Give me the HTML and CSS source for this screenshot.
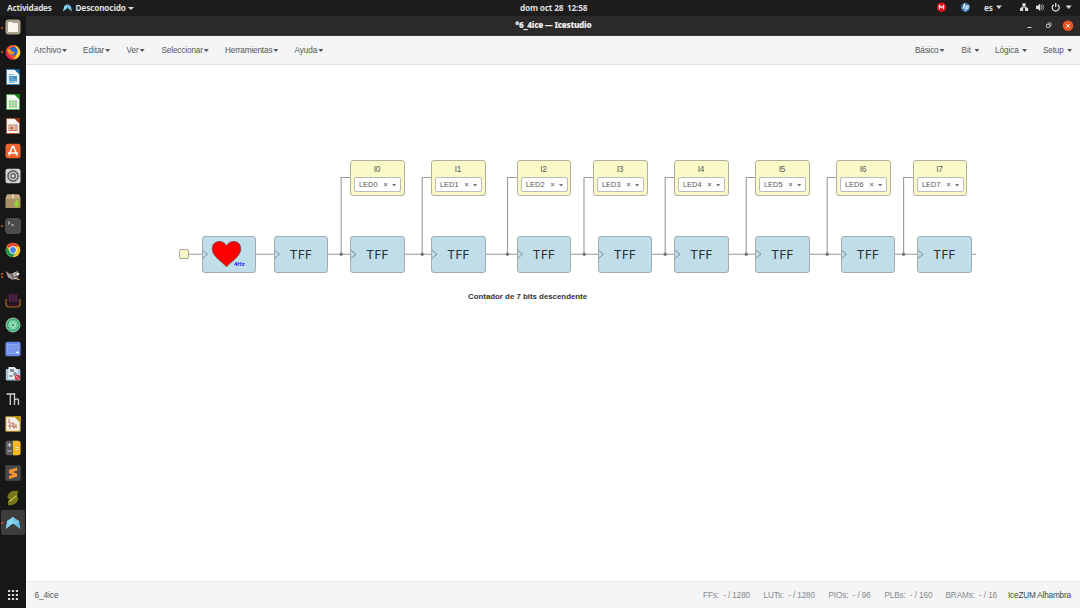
FILE: index.html
```html
<!DOCTYPE html>
<html lang="es">
<head>
<meta charset="utf-8">
<title>*6_4ice — Icestudio</title>
<link rel="stylesheet" href="styles.css">
</head>
<body>
<header class="topbar">
  <span class="activities">Actividades</span>
  <svg class="app-logo" viewBox="0 0 16 14"><path d="M0 13 2 4 8 0 8 7Z" fill="#8edaf5"/><path d="M16 13 14 4 8 0 8 7Z" fill="#6cc4e8"/></svg>
  <span class="app-name">Desconocido</span><i class="caret light"></i>
  <span class="clock">dom oct 28&nbsp; 12:58</span>
  <svg class="tray" viewBox="0 0 150 16">
    <circle cx="11.5" cy="7.3" r="4.7" fill="#e20d18"/><path d="M9.4 9.3V5.5L11.5 7.6 13.6 5.5V9.3" fill="none" stroke="#fff" stroke-width="1.1"/>
    <circle cx="35.5" cy="7.3" r="4.4" fill="#3f7fb9"/><path d="M34.700 3.200 33 8.800M33.800 5.800h1.600l-.8 3M37 6 35.400 11.400M36.700 5.800h1.800l-.9 3h-1.500" fill="none" stroke="#fff" stroke-width=".9"/>
    <path d="M66 5.600h5.800L68.900 8.900Z" fill="#ddd"/>
    <path d="M92.400 3.300h3.200v3h-3.200ZM90 8h3.200v3H90ZM95 8h3.200v3H95Z" fill="#ddd"/><path d="M94 6v1.500M91.600 8.500V7.200h5v1.300" stroke="#ddd" fill="none"/>
    <path d="M106 5.800h1.800L110.200 3.500v7.600L107.800 8.900H106Z" fill="#ddd"/><path d="M111.300 5.300q1.400 2 0 4" fill="none" stroke="#ddd" stroke-width=".9"/><path d="M112.600 4q2.400 3.300 0 6.600" fill="none" stroke="#999" stroke-width=".9"/>
    <path d="M123.700 4.700a3.500 3.500 0 1 0 4 0M125.700 3.100v4" fill="none" stroke="#e4e4e4" stroke-width="1.200"/>
    <path d="M135.800 5.600h5.800L138.700 8.900Z" fill="#ddd"/>
  </svg>
  <span class="lang">es</span>
</header>

<div class="desktop">
  <nav class="dock">
    <ul class="launchers">
      <li class="run"><svg viewBox="0 0 16 16"><rect x=".5" y=".5" width="15" height="15" rx="3" fill="#aaa18e"/><path d="M3 4q0-1 1-1h3l1 1h4q1 0 1 1v7q0 1-1 1H4q-1 0-1-1Z" fill="#f8f6ef"/></svg></li>
      <li class="run"><svg viewBox="0 0 16 16"><circle cx="8" cy="8.300" r="7.300" fill="#ff5a2a"/><path d="M10 1q5 3 5.300 7.500A7.300 7.300 0 0 1 8 15.600Q14 12 10 1" fill="#ffd22e"/><path d="M1.500 4.500Q-1 13 6 15.400l4-.4Q3 13 1.500 4.500" fill="#e8224f"/><circle cx="8.400" cy="7.300" r="4.200" fill="#2468c8"/><path d="M2.500 5Q6 4.500 7 7.500l3 .2Q9 11 5.500 10.300 2.500 9 2.500 5" fill="#ff9820"/></svg></li>
      <li><svg viewBox="0 0 16 16"><path d="M1.500.5H10l4.500 4.500v10.500h-13Z" fill="#f3f5f7" stroke="#2585c4" stroke-width=".7"/><path d="M9 0h6v6Z" fill="#145f92"/><path d="M4 7h8v5.500H4Z" fill="#3f91c8"/><path d="M3.500 5.500h5M3.500 9h5M3.500 11h9M3.500 13.500h6" stroke="#86b8d8"/></svg></li>
      <li><svg viewBox="0 0 16 16"><path d="M1.500.5H10l4.500 4.500v10.500h-13Z" fill="#f5f7f3" stroke="#31b52c" stroke-width=".7"/><path d="M9 0h6v6Z" fill="#14851b"/><path d="M4 6.500h8v7H4Z" fill="#80c878"/><path d="M4 8.800h8M4 11.200h8M6.600 6.500v7M9.400 6.500v7" stroke="#e1f4dc" stroke-width=".7"/></svg></li>
      <li><svg viewBox="0 0 16 16"><path d="M1.500.5H10l4.500 4.500v10.500h-13Z" fill="#f7f4f1" stroke="#bf4f25" stroke-width=".7"/><path d="M9 0h6v6Z" fill="#8d3213"/><rect x="4" y="7" width="8" height="5.500" fill="#f0d4c8" stroke="#b66145" stroke-width=".8"/><circle cx="6.800" cy="10" r="1.500" fill="#c15939"/><path d="M9 9h2M9 11h2" stroke="#b66145" stroke-width=".7"/></svg></li>
      <li><svg viewBox="0 0 16 16"><rect x=".5" y=".8" width="15" height="14.400" rx="2.500" fill="#f0622d"/><path d="M4 12.500 7.400 3.500h1.200L12 12.500M3 10h10" fill="none" stroke="#fff" stroke-width="1.500"/></svg></li>
      <li><svg viewBox="0 0 16 16"><rect x=".5" y=".8" width="15" height="14.400" rx="2.500" fill="#d4d4d1"/><circle cx="8" cy="8" r="5" fill="none" stroke="#555" stroke-width="1.300"/><circle cx="8" cy="8" r="2.300" fill="none" stroke="#555" stroke-width="1.300"/><circle cx="8" cy="8" r="6" fill="none" stroke="#777" stroke-width=".7" stroke-dasharray="1 1"/></svg></li>
      <li><svg viewBox="0 0 16 16"><path d="M2 1.500h12l1.500 4v9.500H.5V5.500Z" fill="#a98e65"/><path d="M2 1.500h12l1.500 4H.5Z" fill="#c4ab81"/><path d="M7 1.500h2v4H7Z" fill="#e4d4b5"/><path d="M10.300 6.500h3v4h2L11.800 15 8.300 10.500h2Z" fill="#98cf38"/></svg></li>
      <li class="run"><svg viewBox="0 0 16 16"><rect x=".8" y=".8" width="14.400" height="14.400" rx="2" fill="#4b4b4b" stroke="#5c5c5c"/><path d="M3 3.500 5 5 3 6.500M6 7h3" fill="none" stroke="#ddd" stroke-width=".9"/></svg></li>
      <li><svg viewBox="0 0 16 16"><circle cx="8" cy="8" r="7.300" fill="#f4c62c"/><path d="M8 8 1.600 4.300A7.300 7.300 0 0 1 14.400 4.600H8Z" fill="#db4938"/><path d="M1.600 4.300A7.300 7.300 0 0 0 7.600 15.300L11 9.500H5Z" fill="#269653"/><circle cx="8" cy="8" r="3.700" fill="#fff"/><circle cx="8" cy="8" r="2.900" fill="#4387ef"/></svg></li>
      <li class="run twice"><svg viewBox="0 0 16 16"><path d="M1 4 4 6.500 9 6 12.500 3.500 14 7 12 12 7 13 3 10.500Z" fill="#77736a"/><path d="M1 4 5 8l3 4-5-2Z" fill="#aaa79e"/><circle cx="10" cy="7" r="1.700" fill="#eee"/><circle cx="13" cy="7" r="1.300" fill="#eee"/><circle cx="10.200" cy="7" r=".7" fill="#111"/><path d="m9 11 5 1.500" stroke="#ddd"/><path d="m13 12 1.500 1" stroke="#d88b38" stroke-width="1.500"/></svg></li>
      <li><svg viewBox="0 0 16 16"><path d="M1 7v5q0 3 3 3h8q3 0 3-3V7" fill="#33151d" stroke="#a06a1b" stroke-width="1.200"/><rect x="2.500" y="1.500" width="11" height="11" rx="1.500" fill="#32152e"/><path d="M5 3v7M8 2v8M11 3v7" stroke="#6a365d"/><path d="M3 11h10" stroke="#21101e" stroke-width="2"/></svg></li>
      <li><svg viewBox="0 0 16 16"><circle cx="8" cy="8" r="7" fill="#3fae75" stroke="#b6dec9" stroke-width=".8"/><g fill="none" stroke="#b8ecd0" stroke-width=".8"><ellipse cx="8" cy="8" rx="4.700" ry="2"/><ellipse cx="8" cy="8" rx="4.700" ry="2" transform="rotate(60 8 8)"/><ellipse cx="8" cy="8" rx="4.700" ry="2" transform="rotate(120 8 8)"/></g></svg></li>
      <li><svg viewBox="0 0 16 16"><rect x=".4" y=".8" width="15.200" height="14.400" rx="2" fill="#6688e4"/><rect x="2.500" y="3.500" width="11" height="9" fill="#7798ee" stroke="#b7caff" stroke-width=".7" stroke-dasharray="1.500 1"/><path d="M11 11.500h3M12.500 10v3" stroke="#fff" stroke-width=".8"/></svg></li>
      <li><svg viewBox="0 0 16 16"><rect x=".8" y="3" width="14.500" height="11.500" rx="1" fill="#a9c5dc"/><path d="M3.500 1h6l3 3v9h-9Z" fill="#edf0f1"/><path d="M5 3h4v3H5ZM4.500 9h3v2h-3Z" fill="#7b93a4"/><circle cx="10" cy="8" r="2" fill="#8397a5"/><circle cx="12.500" cy="11.500" r="2.700" fill="#c83b42"/><path d="m11 10 3 3" stroke="#fff" stroke-width=".7"/></svg></li>
      <li><svg viewBox="0 0 16 16"><path d="M1.500 3h8M5.300 3v11M9.500 2v12M9.500 9q4-2.500 4 1v4" fill="none" stroke="#d2d2d0" stroke-width="1.300"/></svg></li>
      <li><svg viewBox="0 0 16 16"><path d="M.8.7H10l5.200 5.200v9.400H.8Z" fill="#f4eee5" stroke="#ad8414"/><path d="M9 0h7v7Z" fill="#ba930e"/><path d="M4 3v4h4v4h4M3 10h5M5 8v5M9 7v6M11 8v4" fill="none" stroke="#b45c50" stroke-width=".8"/></svg></li>
      <li><svg viewBox="0 0 16 16"><rect x=".5" y=".8" width="15" height="14.400" rx="2.500" fill="#5b5b58"/><path d="M8 .8h5q2.500 0 2.500 2.500v9.400q0 2.500-2.500 2.500H8Z" fill="#f9b624"/><path d="M2.500 5h4M4.500 3v4M2.500 11h4M10.500 7.500h3M10.500 9.500h3" stroke="#eee" stroke-width=".8"/></svg></li>
      <li><svg viewBox="0 0 16 16"><rect x=".3" y=".3" width="15.400" height="15.400" rx="1" fill="#484848"/><path d="M12 2.500v3L7.500 7 12 8.500v3L4 14v-3l4-1.300L4 8V5Z" fill="#f7942c"/></svg></li>
      <li><svg viewBox="0 0 16 16"><path d="M13 .8Q5 0 2.800 5q-1.300 3.500 2 4.500Q2 11 3.300 15.200q7 .5 9.500-4.700 1.500-3.500-1.500-4.500Q13.500 4 13 .8Z" fill="#77781c"/><path d="m4 11.500 8-6" fill="none" stroke="#c4c53c" stroke-width="1.300"/></svg></li>
      <li class="run active"><svg viewBox="0 0 16 16"><path d="M.7 14 2 6 8 2v6.500Z" fill="#82d2f2"/><path d="M15.300 14 14 6 8 2v6.500Z" fill="#6cc0e6"/><path d="M2 6 8 8.500 14 6M8 2v6.500" fill="none" stroke="#a7e2f7" stroke-width=".6"/></svg></li>
    </ul>
    <svg class="apps" viewBox="0 0 12 12"><path d="M1 2h10M1 6h10M1 10h10" stroke="#d8d8d8" stroke-width="2.200" stroke-dasharray="2.200 1.700"/></svg>
  </nav>

  <main class="window">
    <div class="titlebar"><b>*6_4ice — Icestudio</b>
      <svg class="controls" viewBox="0 0 54 20"><path d="M1.500 11.500h4" stroke="#ddd"/><path d="M20.500 8.500h3v3h-3ZM22 8.300V7h3v3h-1.300" fill="none" stroke="#bbb" stroke-width=".9"/><circle cx="42" cy="9.800" r="5.300" fill="#e95420"/><path d="m40.100 7.900 3.800 3.800m0-3.800-3.800 3.800" stroke="#fff" stroke-width="1"/></svg>
    </div>
    <div class="menubar">
      <div class="menus left-menus">
        <span class="m-file">Archivo<i class="caret"></i></span><span class="m-edit">Editar<i class="caret"></i></span><span class="m-view">Ver<i class="caret"></i></span><span class="m-select">Seleccionar<i class="caret"></i></span><span class="m-tools">Herramientas<i class="caret"></i></span><span>Ayuda<i class="caret"></i></span>
      </div>
      <div class="menus right-menus">
        <span class="m-basic">Básico<i class="caret"></i></span><span class="m-bit">Bit<i class="caret gap"></i></span><span class="m-logic">Lógica<i class="caret gap"></i></span><span class="m-setup">Setup<i class="caret gap"></i></span>
      </div>
    </div>
    <section class="canvas">
      <svg class="wires" viewBox="26 65 1054 516">
        <path d="M188 254.300H976M341.200 254V177.500H351M422.200 254V177.500H432M507.500 254V177.500H517M584 254V177.500H594M665.200 254V177.500H675M746.200 254V177.500H756M827.200 254V177.500H837M903.600 254V177.500H913"/>
        <g><circle cx="341.200" cy="254.300" r="1.700"/><circle cx="422.200" cy="254.300" r="1.700"/><circle cx="507.500" cy="254.300" r="1.700"/><circle cx="584.200" cy="254.300" r="1.700"/><circle cx="665.200" cy="254.300" r="1.700"/><circle cx="746.200" cy="254.300" r="1.700"/><circle cx="827.200" cy="254.300" r="1.700"/><circle cx="903.600" cy="254.300" r="1.700"/></g>
      </svg>
      <div class="source"></div>
      <div class="block heart"><svg viewBox="0 0 54 36"><path d="M24.500 30.800C20 25.500 10.200 20.500 10.200 12.700 10.200 4.500 20.500 3 24.500 9.700 28.500 3 38.800 4.500 38.800 12.700 38.800 20.500 29 25.500 24.500 30.800Z" fill="#f00" stroke="#65404a" stroke-width=".7"/></svg><span>4Hz</span></div>
      <div class="block t0">TFF</div><div class="block t1">TFF</div><div class="block t2">TFF</div><div class="block t3">TFF</div><div class="block t4">TFF</div><div class="block t5">TFF</div><div class="block t6">TFF</div><div class="block t7">TFF</div><div class="block t8">TFF</div>
      <svg class="wires ports" viewBox="26 65 1054 516"><path d="m202.500 250.300 5 4-5 4M274.500 250.300l5 4-5 4M351 250.300l5 4-5 4M432 250.300l5 4-5 4M517.500 250.300l5 4-5 4M598.500 250.300l5 4-5 4M675 250.300l5 4-5 4M756 250.300l5 4-5 4M841.500 250.300l5 4-5 4M918 250.300l5 4-5 4"/></svg>
      <div class="output o0">I0<div class="select">LED0<b>×</b><i class="caret"></i></div></div>
      <div class="output o1">I1<div class="select">LED1<b>×</b><i class="caret"></i></div></div>
      <div class="output o2">I2<div class="select">LED2<b>×</b><i class="caret"></i></div></div>
      <div class="output o3">I3<div class="select">LED3<b>×</b><i class="caret"></i></div></div>
      <div class="output o4">I4<div class="select">LED4<b>×</b><i class="caret"></i></div></div>
      <div class="output o5">I5<div class="select">LED5<b>×</b><i class="caret"></i></div></div>
      <div class="output o6">I6<div class="select">LED6<b>×</b><i class="caret"></i></div></div>
      <div class="output o7">I7<div class="select">LED7<b>×</b><i class="caret"></i></div></div>
      <div class="note">Contador de 7 bits descendente</div>
    </section>
    <footer class="status"><span class="file">6_4ice</span><span class="ff">FFs:&nbsp; - / 1280</span><span class="lut">LUTs:&nbsp; - / 1280</span><span class="pio">PIOs:&nbsp; - / 96</span><span class="plb">PLBs:&nbsp; - / 160</span><span class="bram">BRAMs:&nbsp; - / 16</span><span class="board">IceZUM Alhambra</span></footer>
  </main>
</div>
</body>
</html>
```
FILE: styles.css
```css
* { box-sizing: border-box; }
body { margin: 0; width: 1080px; height: 608px; overflow: hidden; display: flex; flex-direction: column; background: #fff; font-family: "Liberation Sans", sans-serif; }
svg { display: block; flex: none; }
.topbar { height: 16px; flex: none; display: flex; align-items: center; position: relative; background: #1d1d1d; color: #dedede; font: bold 8.3px/15px "Noto Sans", sans-serif; letter-spacing: -.3px; white-space: nowrap; }
.topbar > span { height: 16px; }
.activities { width: 56px; padding-left: 7px; }
.app-logo { width: 9px; height: 8px; margin: 0 3.500px 0 7px; }
.app-name { width: 51px; letter-spacing: -.2px; }
.clock { margin-left: 386px; width: 70px; letter-spacing: -.22px; }
.tray { width: 150px; height: 16px; margin-left: auto; }
.lang { position: absolute; left: 984px; top: 0; }
.caret { display: inline-block; border: 2.500px solid transparent; border-width: 2.500px 2.500px 0; border-top-color: currentColor; margin-left: 1px; vertical-align: 1.500px; }
.menus .caret { width: 5px; height: 3px; border: 0; background: currentColor; clip-path: polygon(0 0, 100% 0, 50% 100%); vertical-align: 1px; }
.caret.light { border-width: 3px 3px 0; margin-left: 1.500px; }
.menus .caret.gap { margin-left: 3.500px; }
.desktop { flex: 1; min-height: 0; display: flex; }
.dock { width: 26px; background: #171717; display: flex; flex-direction: column; align-items: center; justify-content: space-between; padding-bottom: 7px; }
.launchers { width: 26px; list-style: none; margin: -1px 0 0; padding: 0; }
.launchers li { position: relative; height: 24.780px; display: flex; align-items: center; justify-content: center; }
.launchers svg { width: 16px; height: 16px; }
.launchers .active { background: #3d3d3d; border-radius: 2px; margin: 0 1px; }
.run::before { content: ""; position: absolute; left: 1px; top: 11.500px; width: 2px; height: 2px; border-radius: 1px; background: #e95420; }
.active::before { left: 0; }
.twice::before { top: 10px; box-shadow: 0 3px #e95420; }
.apps { width: 12px; height: 12px; }
.window { flex: 1; min-width: 0; display: flex; flex-direction: column; }
.titlebar { height: 20px; flex: none; display: flex; justify-content: flex-end; background: #2c292a; border-bottom: 1px solid #3b3938; color: #e9e9e9; font: bold 8.200px/18px "Noto Sans", sans-serif; letter-spacing: -.32px; }
.titlebar b { width: 539px; white-space: nowrap; }
.controls { width: 54px; height: 20px; margin-left: -28px; }
.menubar { height: 29px; flex: none; display: flex; justify-content: space-between; background: #f4f5f7; border-bottom: 1px solid #dfe3e6; color: #555; font-size: 8.200px; line-height: 29px; letter-spacing: -.04px; white-space: nowrap; }
.menus { display: flex; }
.left-menus { padding-left: 8px; }
.m-file { width: 49px; }
.m-edit { width: 43.500px; }
.m-view { width: 35px; }
.m-select { width: 63.500px; letter-spacing: -.13px; }
.m-tools { width: 69.500px; letter-spacing: -.15px; }
.m-basic { width: 46.500px; letter-spacing: -.18px; }
.m-bit { width: 33.500px; }
.m-logic { width: 48px; letter-spacing: -.08px; }
.m-setup { width: 37px; letter-spacing: -.15px; }
.canvas { position: relative; flex: 1; background: #fff; }
.wires { position: absolute; inset: 0; width: 1054px; height: 516px; fill: none; stroke: #999; stroke-width: 1.100; }
.wires g { fill: #777; stroke: none; }
.ports { stroke: #6c7b83; stroke-width: .8; }
.source { position: absolute; left: 153px; top: 184px; width: 10px; height: 10px; background: #fafac8; border: 1px solid #aaa999; border-radius: 2px; }
.block, .output { position: absolute; width: 54px; height: 36px; border: 1px solid #a3adb1; border-radius: 3px; }
.t1, .t2, .t5, .t6, .t8, .o0, .o1, .o3, .o4, .o5, .o6 { width: 55px; }
.block { top: 171px; height: 37px; background: #c0dee9; color: #2b3033; font: 13px/35px "Noto Sans", sans-serif; text-align: center; letter-spacing: .4px; }
.heart { left: 176px; }
.heart svg { width: 54px; height: 36px; margin: -1px; }
.heart span { position: absolute; left: 31px; top: 23px; color: #22f; font: bold 5.800px/8px "Noto Sans", sans-serif; letter-spacing: 0; }
.t0 { left: 248px; }
.t1, .o0 { left: 324px; }
.t2, .o1 { left: 405px; }
.t3, .o2 { left: 491px; }
.t4 { left: 572px; }
.t5, .o4 { left: 648px; }
.t6, .o5 { left: 729px; }
.t7 { left: 815px; }
.t8 { left: 891px; }
.o3 { left: 567px; }
.o6 { left: 810px; }
.o7 { left: 887px; }
.output { top: 95px; background: #fafac8; border-color: #b1b09c; color: #555; padding: 2px 4px 0 3px; text-align: center; font-size: 8.300px; line-height: 13px; letter-spacing: -.1px; }
.select { height: 15px; width: 47px; margin-top: 1px; border: 1px solid #bbb; border-radius: 2px; background: #fff; display: flex; align-items: center; padding-left: 4px; font-size: 7.400px; letter-spacing: 0; }
.select b { margin-left: 6px; font-size: 7px; color: #777; }
.select .caret { width: 5px; height: 3px; border: 0; background: #777; clip-path: polygon(0 0, 100% 0, 50% 100%); margin: 1px 0 0 4px; }
.note { position: absolute; left: 442px; top: 226px; font-size: 7.900px; line-height: 12px; font-weight: bold; letter-spacing: -.02px; color: #333; white-space: nowrap; }
.status { height: 27px; flex: none; display: flex; background: #f4f5f7; border-top: 1px solid #e6e9ec; color: #888; font-size: 8.200px; line-height: 27px; letter-spacing: -.12px; white-space: nowrap; }
.file { margin-left: 8.500px; margin-right: auto; color: #555; font-size: 8.400px; }
.ff { width: 60.500px; }
.lut { width: 65px; }
.pio { width: 56px; }
.plb { width: 61px; }
.bram { width: 62.500px; }
.board { width: 72px; color: #444; letter-spacing: -.18px; }
```
